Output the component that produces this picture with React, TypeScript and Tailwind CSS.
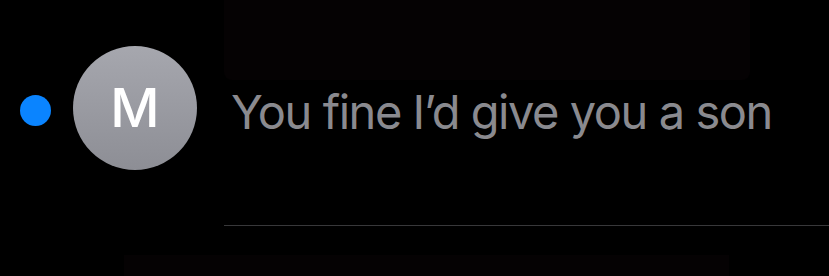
export default function App() {
  return (
    <div
      className="w-[829px] h-[276px] bg-black overflow-hidden relative"
      style={{ fontFamily: "Inter, 'Noto Sans', sans-serif" }}
    >
      <div className="flex">
        {/* unread dot + avatar */}
        <div className="flex items-center pt-[45px] pl-[20px] h-[170px] gap-[22px] w-[224px] shrink-0">
          <div className="w-[31px] h-[31px] rounded-full bg-[#0a84ff] mt-[6px]"></div>
          <div className="w-[124px] h-[124px] rounded-full bg-gradient-to-b from-[#a6a7ae] to-[#8d8e95] flex items-center justify-center">
            <span className="text-white text-[54px] font-medium leading-none">M</span>
          </div>
        </div>

        {/* message column */}
        <div className="flex-1 flex flex-col">
          <div className="w-[526px] h-[80px] bg-[#050203] rounded-b-lg"></div>
          <p className="mt-[4px] pl-[7px] text-[47px] leading-[56px] tracking-[-1.45px] text-[#8a8a8f] whitespace-nowrap">
            You fine I’d give you a son
          </p>
          <div className="mt-[85px] h-px bg-[#38383a]"></div>
          <div className="mt-[29px] h-[21px] bg-[#050203] mr-[100px] -ml-[100px]"></div>
        </div>
      </div>
    </div>
  );
}
